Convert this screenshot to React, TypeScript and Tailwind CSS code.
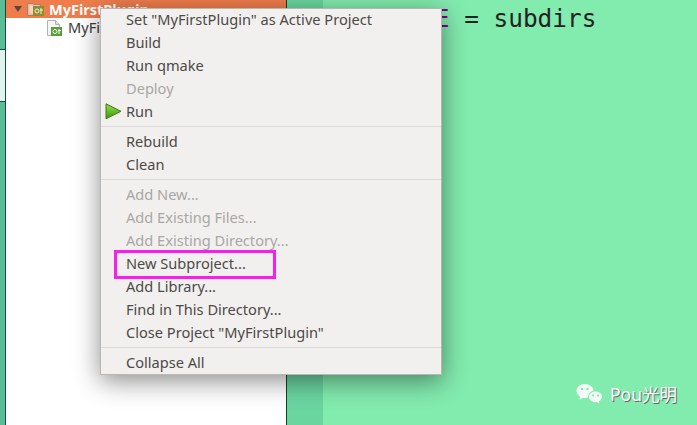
const groups = [
  [
    { label: 'Set "MyFirstPlugin" as Active Project' },
    { label: "Build" },
    { label: "Run qmake" },
    { label: "Deploy", disabled: true },
    { label: "Run", play: true },
  ],
  [{ label: "Rebuild" }, { label: "Clean" }],
  [
    { label: "Add New...", disabled: true },
    { label: "Add Existing Files...", disabled: true },
    { label: "Add Existing Directory...", disabled: true },
    { label: "New Subproject...", marked: true },
    { label: "Add Library..." },
    { label: "Find in This Directory..." },
    { label: 'Close Project "MyFirstPlugin"' },
  ],
  [{ label: "Collapse All" }],
];

function QtFolder() {
  return (
    <svg width="17" height="15" viewBox="0 0 17 15" className="shrink-0">
      <path d="M.5 1.5h5l1 1h7v11H.5z" fill="#f2b79c" stroke="#a5806c" />
      <path d="M2.5 3.5h9v8h-9z" fill="#f7d5c4" />
      <rect x="6" y="4" width="11" height="10" fill="#8f8d2e" />
      <circle cx="10" cy="9" r="2" fill="none" stroke="#f4f0d8" />
      <path d="M14 6v6M13 8h3" stroke="#f4f0d8" />
    </svg>
  );
}

function QtFile() {
  return (
    <svg width="16" height="16" viewBox="0 0 16 16" className="shrink-0">
      <path d="M1.5.5h8l4 4v11h-12z" fill="#f6f6f6" stroke="#b0b0b0" />
      <path d="M9.5.5v4h4" fill="#e0e0e0" stroke="#b0b0b0" />
      <rect x="5" y="7" width="11" height="9" fill="#55a032" />
      <circle cx="9" cy="11.5" r="2" fill="none" stroke="#fff" />
      <path d="M13 9v5M12 10.5h3" stroke="#fff" />
    </svg>
  );
}

function PlayIcon() {
  return (
    <svg width="17" height="17" viewBox="0 0 17 17" className="absolute left-[4px] top-[3px]">
      <defs>
        <linearGradient id="play" x1="0" y1="0" x2="0" y2="1">
          <stop offset="0" stopColor="#97dc4e" />
          <stop offset="1" stopColor="#3c9a0c" />
        </linearGradient>
      </defs>
      <path d="M1 .8l15 7.5L1 15.8z" fill="url(#play)" stroke="#3a7f10" />
    </svg>
  );
}

function WechatIcon() {
  return (
    <svg width="28" height="23" viewBox="0 0 28 23" className="shrink-0">
      <path d="M9 1c4.700 0 8.500 3 8.500 7s-3.800 7-8.500 7c-.8 0-1.500-.1-2.200-.3L3.500 17l.6-3.300C2 12.400.5 10.400.5 8 .5 4 4.300 1 9 1z" fill="#f2fbf6" />
      <circle cx="6" cy="6" r="1.200" fill="#82ebae" />
      <circle cx="11.500" cy="6" r="1.200" fill="#82ebae" />
      <path d="M19.500 7.500c4.100 0 7.500 2.700 7.500 6.200 0 2-1.200 3.800-2.900 5l.5 3-3-1.800c-.7.100-1.400.2-2.100.2-4.100 0-7.500-2.700-7.500-6.400s3.400-6.200 7.500-6.200z" fill="#82ebae" />
      <path d="M19.500 8.500c3.700 0 6.500 2.300 6.500 5.200 0 1.900-1.200 3.500-3 4.500l.4 2.400-2.600-1.500c-.4.100-.9.100-1.300.1-3.700 0-6.500-2.400-6.500-5.500s2.800-5.200 6.500-5.200z" fill="#f2fbf6" />
      <circle cx="17" cy="12.500" r="1.100" fill="#82ebae" />
      <circle cx="22" cy="12.500" r="1.100" fill="#82ebae" />
    </svg>
  );
}

export default function App() {
  return (
    <div className="relative flex h-[425px] w-[697px] overflow-hidden bg-[#82ebae] font-['Noto_Sans',sans-serif]">
      <div className="flex w-[6px] flex-col border-r border-[#1a4a3a]">
        <div className="h-[50px] border-b border-[#1a4a3a] bg-[#5abd95]" />
        <div className="h-[52px] border-b border-[#1a4a3a] bg-[#e0f3ec]" />
        <div className="flex-1 bg-[#5abd95]" />
      </div>

      {/* Tree */}
      <div className="w-[281px] border-r border-[#123f30] bg-white">
        <div className="flex h-[18px] items-center bg-[#ef7d4c] pl-[8px]">
          <span className="mr-[5px] h-0 w-0 border-x-[4px] border-t-[6px] border-x-transparent border-t-[#5a4638]" />
          <QtFolder />
          <span className="ml-[5px] text-[14.5px] font-bold leading-none text-white">MyFirstPlugin</span>
        </div>
        <div className="flex h-[20px] items-center gap-[6px] pl-[40px] text-[14.6px] text-[#3c3b37]">
          <QtFile />
          <span>MyFirstPlugin.pro</span>
        </div>
      </div>

      <div className="w-[36px] shrink-0 bg-[#6bd5a0]" />

      <div className="min-w-0 flex-1 whitespace-nowrap pl-[9px] pt-[2px] font-['DejaVu_Sans_Mono',monospace] text-[24.4px] leading-[34px] text-[#222]">
        <span className="text-[#800080]">TEMPLATE</span> = subdirs
      </div>

      {/* Context menu */}
      <div className="absolute left-[100px] top-[8px] w-[342px] border border-[#b8b6b2] bg-[#f2f0ee] text-[14.6px] text-[#4c4a48] shadow-[0_6px_24px_rgba(0,0,0,0.45)]">
        <div className="-mt-px">
          {groups.map((group, i) => (
            <div key={i} className={i > 0 ? "border-t border-[#dcdad7] pt-[3px]" : ""}>
              {group.map((item) => (
                <div
                  key={item.label}
                  className={`relative flex h-[23px] items-center pl-[25px] ${
                    "disabled" in item && item.disabled ? "text-[#a9a7a5]" : ""
                  }`}
                >
                  {"play" in item && item.play && <PlayIcon />}
                  {"marked" in item && item.marked && (
                    <span className="absolute left-[13px] top-[-2px] h-[29px] w-[162px] border-[3px] border-[#f81ef0]" />
                  )}
                  {item.label}
                </div>
              ))}
              {i < groups.length - 1 && <div className="h-[3px]" />}
            </div>
          ))}
        </div>
      </div>

      {/* Watermark */}
      <div className="absolute left-[576px] top-[382px] flex items-center gap-[6px] text-[17.5px] leading-[24px] text-white [text-shadow:1px_1px_0_#666]">
        <WechatIcon />
        <span className="font-['Noto_Sans','Noto_Sans_CJK_SC',sans-serif]">Pou光明</span>
      </div>
    </div>
  );
}
